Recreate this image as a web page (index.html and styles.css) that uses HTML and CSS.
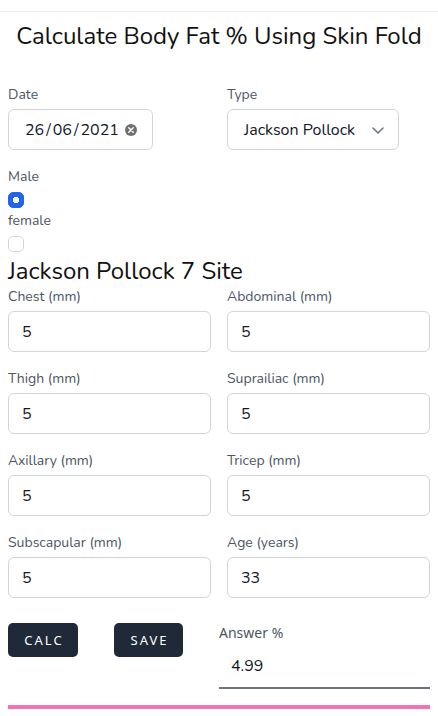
FILE: index.html
```html
<!DOCTYPE html>
<html lang="en">
<head>
<meta charset="utf-8">
<title>Body Fat</title>
<link rel="stylesheet" href="styles.css">
</head>
<body>
<div class="topbar"></div>
<main class="page">
  <h1 class="title">Calculate Body Fat % Using Skin Fold</h1>
  <div class="grid">
    <div class="field">
      <label class="label">Date</label>
      <div class="box date">
        <span class="date-text">26<span class="sl">/</span>06<span class="sl">/</span>2021</span>
        <svg class="clear" width="12" height="12" viewBox="0 0 12 12"><circle cx="6" cy="6" r="6" fill="#6f6f6f"/><path d="M3.8 3.8 8.2 8.2M8.2 3.8 3.8 8.2" stroke="#fff" stroke-width="1.5" stroke-linecap="round"/></svg>
      </div>
    </div>
    <div class="field">
      <label class="label">Type</label>
      <div class="box select">
        <span>Jackson Pollock</span>
        <svg class="chev" width="12" height="7" viewBox="0 0 12 7"><path d="M1 1 6 6 11 1" fill="none" stroke="#6b7280" stroke-width="1.5" stroke-linecap="round" stroke-linejoin="round"/></svg>
      </div>
    </div>
  </div>
  <div class="gender">
    <label class="label">Male</label>
    <input class="radio" type="radio" name="g" checked>
    <label class="label">female</label>
    <input class="radio" type="radio" name="g">
  </div>
  <h2 class="subtitle">Jackson Pollock 7 Site</h2>
  <div class="grid sites">
    <div class="field"><label class="label">Chest (mm)</label><input class="box num" type="text" value="5"></div>
    <div class="field"><label class="label">Abdominal (mm)</label><input class="box num" type="text" value="5"></div>
    <div class="field"><label class="label">Thigh (mm)</label><input class="box num" type="text" value="5"></div>
    <div class="field"><label class="label">Suprailiac (mm)</label><input class="box num" type="text" value="5"></div>
    <div class="field"><label class="label">Axillary (mm)</label><input class="box num" type="text" value="5"></div>
    <div class="field"><label class="label">Tricep (mm)</label><input class="box num" type="text" value="5"></div>
    <div class="field"><label class="label">Subscapular (mm)</label><input class="box num" type="text" value="5"></div>
    <div class="field"><label class="label">Age (years)</label><input class="box num" type="text" value="33"></div>
  </div>
  <div class="actions">
    <button class="btn calc">CALC</button>
    <button class="btn save">SAVE</button>
    <div class="answer">
      <label class="answer-label">Answer %</label>
      <input class="answer-input" type="text" value="4.99">
    </div>
  </div>
  <div class="pinkbar"></div>
</main>
</body>
</html>
```
FILE: styles.css
```css
* { box-sizing: border-box; }
body {
  margin: 0;
  background: #fff;
  font-family: "Nunito", "Noto Sans", "Open Sans", sans-serif;
  color: #111827;
}
.topbar {
  height: 12px;
  border-bottom: 1px solid #eceef1;
}
.page {
  padding: 0 8px;
}
.title {
  margin: 8px 0 33px;
  font-size: 24px;
  line-height: 32px;
  font-weight: 400;
  text-align: center;
  color: #111;
}
.grid {
  display: grid;
  grid-template-columns: 1fr 1fr;
  column-gap: 16px;
  row-gap: 17px;
}
.field {
  display: flex;
  flex-direction: column;
  gap: 4px;
  align-items: flex-start;
}
.label {
  display: block;
  font-size: 14px;
  line-height: 20px;
  color: #4b5563;
}
.box {
  height: 41px;
  border: 1px solid #d1d5db;
  border-radius: 6px;
  background: #fff;
  font-family: inherit;
  font-size: 16px;
  color: #111827;
}
.date {
  width: 145px;
  display: flex;
  align-items: center;
  padding: 0 0 0 16px;
  gap: 6px;
}
.sl { padding: 0 2px; }
.select {
  width: 172px;
  display: flex;
  align-items: center;
  justify-content: space-between;
  padding: 0 14px 0 16px;
}
.chev { margin-top: 1px; }
.gender {
  margin-top: 17px;
  display: flex;
  flex-direction: column;
  align-items: flex-start;
}
.radio {
  appearance: none;
  -webkit-appearance: none;
  width: 16px;
  height: 16px;
  margin: 5px 0 3px 0;
  border: 1px solid #d1d5db;
  border-radius: 5px;
  background: #fff;
}
.radio:checked {
  border-color: #2563eb;
  background: #2563eb radial-gradient(circle, #fff 0 3px, transparent 3.5px);
}
.subtitle {
  margin: 0;
  font-size: 24px;
  line-height: 32px;
  font-weight: 400;
  color: #111;
}
.num {
  width: 100%;
  padding: 0 13px;
  outline: none;
}
.actions {
  margin-top: 25px;
  display: flex;
  align-items: flex-start;
  gap: 36px;
}
.btn {
  height: 34px;
  border: none;
  border-radius: 5px;
  background: #1f2937;
  color: #fff;
  font-family: "Noto Sans", "Open Sans", sans-serif;
  font-size: 13px;
  font-weight: 400;
  letter-spacing: 2px;
  padding: 0 0 0 2px;
}
.calc { width: 70px; }
.save { width: 69px; }
.answer {
  flex: 1;
  display: flex;
  flex-direction: column;
}
.answer-label {
  font-family: "Noto Sans", "Open Sans", sans-serif;
  font-size: 14px;
  line-height: 20px;
  color: #4b5563;
}
.answer-input {
  height: 46px;
  border: none;
  border-bottom: 2px solid #6b7280;
  padding: 2px 12px 0;
  font-family: inherit;
  font-size: 16px;
  color: #111827;
  outline: none;
  width: 100%;
}
.pinkbar {
  margin-top: 16px;
  height: 4px;
  background: #f472b6;
}
```
